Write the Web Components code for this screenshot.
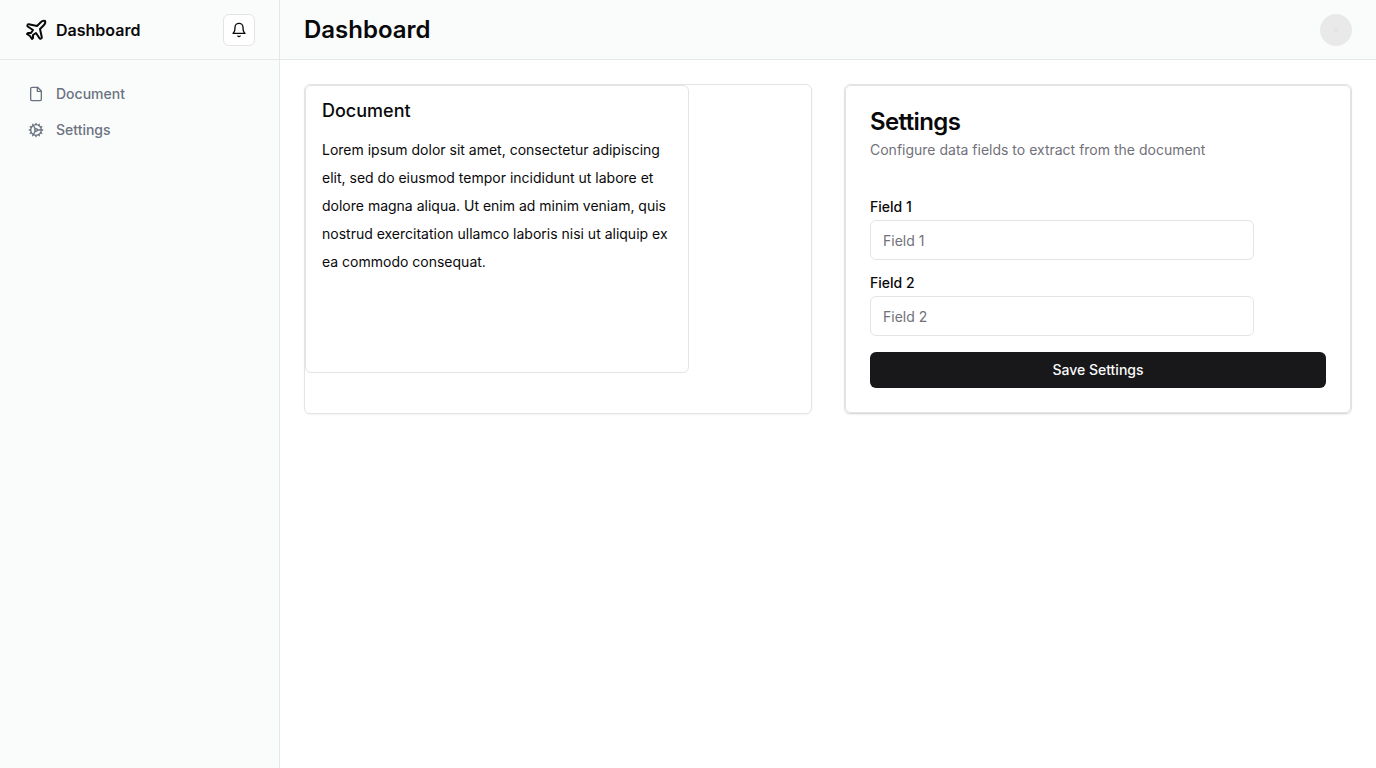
<!DOCTYPE html>
<html lang="en">
<head>
<meta charset="utf-8">
<title>Dashboard</title>
<style>
  body {
    margin: 0;
    font-family: Inter, "Liberation Sans", sans-serif;
    font-size: 14px;
    line-height: 20px;
    color: #09090b;
    background: #fff;
    --border: #e4e4e7;
    --line: #e5e7eb;
    --surface: #fafcfb;
    --muted: #71717a;
    --nav: #6b7280;
    --primary: #18181b;
  }
</style>
</head>
<body>
<dash-app></dash-app>

<script>
const define = (name, markup, setup) => {
  const template = document.createElement('template');
  template.innerHTML = '<style>*{box-sizing:border-box}h1,h2,h3,p{margin:0}</style>' + markup;
  customElements.define(name, class extends HTMLElement {
    constructor() {
      super();
      this.attachShadow({ mode: 'open' }).append(template.content.cloneNode(true));
    }
    connectedCallback() {
      if (setup) setup(this, this.shadowRoot);
    }
  });
};

const ICONS = {
  plane: '<path d="M17.8 19.2 16 11l3.5-3.5C21 6 21.5 4 21 3c-1-.5-3 0-4.5 1.5L13 8 4.8 6.2c-.5-.1-.9.1-1.1.5l-.3.5c-.2.5-.1 1 .3 1.3L9 12l-2 3H4l-1 1 3 2 2 3 1-1v-3l3-2 3.5 5.3c.3.4.8.5 1.3.3l.5-.2c.4-.3.6-.7.5-1.2z"/>',
  bell: '<path d="M6 8a6 6 0 0 1 12 0c0 7 3 9 3 9H3s3-2 3-9"/><path d="M10.3 21a1.94 1.94 0 0 0 3.4 0"/>',
  file: '<path d="M14.5 2H6a2 2 0 0 0-2 2v16a2 2 0 0 0 2 2h12a2 2 0 0 0 2-2V7.5L14.5 2z"/><path d="M14 2v6h6"/>',
  cog: '<path d="M12 20a8 8 0 1 0 0-16 8 8 0 0 0 0 16Z"/><path d="M12 14a2 2 0 1 0 0-4 2 2 0 0 0 0 4Z"/><path d="M12 2v2M12 22v-2M17 20.66l-1-1.73M11 10.27 7 3.34M20.66 17l-1.73-1M3.34 7l1.73 1M14 12h8M2 12h2M20.66 7l-1.73 1M3.34 17l1.73-1M17 3.34l-1 1.73M11 13.73l-4 6.93"/>'
};

define('dash-icon', `
  <style>
    :host { display: block; flex: none; width: 16px; height: 16px; }
    :host([large]) { width: 24px; height: 24px; }
    svg { display: block; width: 100%; height: 100%; }
  </style>
  <svg viewBox="0 0 24 24" fill="none" stroke="currentColor" stroke-width="2"
       stroke-linecap="round" stroke-linejoin="round" aria-hidden="true"></svg>
`, (host, root) => {
  root.querySelector('svg').innerHTML = ICONS[host.getAttribute('name')];
});

define('nav-link', `
  <style>
    :host { display: block; }
    a {
      display: flex; align-items: center; gap: 12px; padding: 8px 12px;
      border-radius: 8px; color: var(--nav); font-weight: 500; text-decoration: none;
    }
  </style>
  <a href="#"><slot name="icon"></slot><slot></slot></a>
`);

define('dash-sidebar', `
  <style>
    :host { display: block; background: var(--surface); border-right: 1px solid var(--line); }
    header {
      display: flex; align-items: center; justify-content: space-between;
      height: 60px; padding: 0 24px; border-bottom: 1px solid var(--line);
    }
    .brand {
      display: flex; align-items: center; gap: 8px;
      color: inherit; text-decoration: none; font-size: 16px; line-height: 24px; font-weight: 600;
    }
    button {
      display: grid; place-items: center; width: 32px; height: 32px; padding: 0;
      color: inherit; background: #fff; border: 1px solid var(--border); border-radius: 6px;
    }
    nav { padding: 16px; }
  </style>
  <header>
    <a class="brand" href="#"><dash-icon name="plane" large></dash-icon><span>Dashboard</span></a>
    <button type="button" aria-label="Toggle notifications"><dash-icon name="bell"></dash-icon></button>
  </header>
  <nav>
    <nav-link><dash-icon slot="icon" name="file"></dash-icon>Document</nav-link>
    <nav-link><dash-icon slot="icon" name="cog"></dash-icon>Settings</nav-link>
  </nav>
`);

define('dash-topbar', `
  <style>
    :host {
      display: flex; align-items: center; justify-content: space-between;
      height: 60px; padding: 0 24px; box-sizing: border-box;
      background: var(--surface); border-bottom: 1px solid var(--line);
    }
    h1 { font-size: 24px; line-height: 32px; font-weight: 600; }
    button {
      width: 32px; height: 32px; padding: 0; border: 0; border-radius: 50%;
      background: radial-gradient(circle, #e4e4e4 2px, #e9e9e9 3px);
    }
  </style>
  <h1><slot></slot></h1>
  <button type="button" aria-label="Toggle user menu"></button>
`);

define('dash-panel', `
  <style>
    :host {
      display: block; box-sizing: border-box; border: 1px solid var(--border);
      border-radius: 6px; box-shadow: 0 1px 2px rgb(0 0 0 / 5%);
    }
  </style>
  <slot></slot>
`);

define('document-card', `
  <style>
    :host {
      display: block; box-sizing: border-box; max-width: 384px; min-height: 288px;
      padding: 16px; border: 1px solid var(--border); border-radius: 6px;
    }
    h3 { margin-bottom: 16px; font-size: 18px; line-height: 18px; font-weight: 500; }
    p { line-height: 28px; }
  </style>
  <h3><slot name="title"></slot></h3>
  <p><slot></slot></p>
`);

define('text-field', `
  <style>
    :host { display: flex; flex-direction: column; gap: 6px; max-width: 384px; }
    label { line-height: 14px; font-weight: 500; }
    input {
      width: 100%; height: 40px; padding: 8px 12px; font: inherit; color: inherit;
      background: #fff; border: 1px solid var(--border); border-radius: 6px;
    }
    input::placeholder { color: var(--muted); opacity: 1; }
  </style>
  <label for="field"></label>
  <input id="field" type="text">
`, (host, root) => {
  const text = host.getAttribute('label');
  root.querySelector('label').textContent = text;
  root.querySelector('input').placeholder = text;
});

define('settings-card', `
  <style>
    :host {
      display: block; box-sizing: border-box; padding: 24px;
      border: 1px solid var(--border); border-radius: 6px;
      box-shadow: 0 1px 2px rgb(0 0 0 / 5%);
    }
    h2 { font-size: 24px; line-height: 24px; font-weight: 600; letter-spacing: -0.025em; }
    header { display: grid; gap: 6px; }
    header p { color: var(--muted); }
    form { display: grid; gap: 16px; margin-top: 40px; }
    button {
      height: 36px; padding: 8px 16px; font: inherit; font-weight: 500;
      color: #fafafa; background: var(--primary); border: 0; border-radius: 6px;
    }
  </style>
  <header>
    <h2>Settings</h2>
    <p>Configure data fields to extract from the document</p>
  </header>
  <form>
    <text-field label="Field 1"></text-field>
    <text-field label="Field 2"></text-field>
    <button type="button">Save Settings</button>
  </form>
`);

define('dash-app', `
  <style>
    :host { display: grid; grid-template-columns: 280px minmax(0, 1fr); min-height: 100vh; }
    main {
      display: grid; grid-template-columns: repeat(2, minmax(0, 1fr));
      gap: 32px; padding: 24px;
    }
  </style>
  <dash-sidebar></dash-sidebar>
  <div>
    <dash-topbar>Dashboard</dash-topbar>
    <main>
      <dash-panel>
        <document-card>
          <span slot="title">Document</span>
          Lorem ipsum dolor sit amet, consectetur adipiscing elit, sed do eiusmod tempor incididunt ut labore et dolore magna aliqua. Ut enim ad minim veniam, quis nostrud exercitation ullamco laboris nisi ut aliquip ex ea commodo consequat.
        </document-card>
      </dash-panel>
      <dash-panel><settings-card></settings-card></dash-panel>
    </main>
  </div>
`);
</script>
</body>
</html>
